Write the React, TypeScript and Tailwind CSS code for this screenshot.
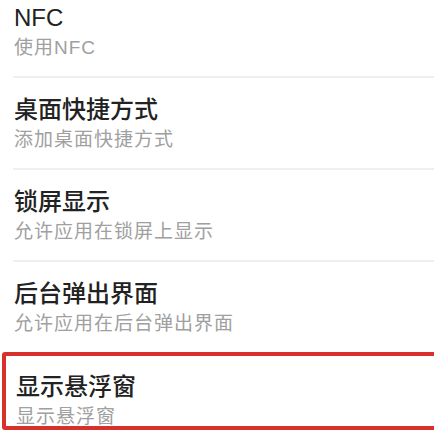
const items = [
  { title: 'NFC', sub: '使用NFC' },
  { title: '桌面快捷方式', sub: '添加桌面快捷方式' },
  { title: '锁屏显示', sub: '允许应用在锁屏上显示' },
  { title: '后台弹出界面', sub: '允许应用在后台弹出界面' },
]

const font = "font-['Liberation_Sans','Noto_Sans_CJK_SC',sans-serif]"

function Row({ title, sub, last }: { title: string; sub: string; last?: boolean }) {
  return (
    <div className={`ml-[13px] pt-[17px] pb-[16px] ${last ? 'pb-[12px]' : 'border-b-2 border-[#efefef]'}`}>
      <div className="pl-[1px] text-[24px] leading-[30px] font-medium text-[#222]">{title}</div>
      <div className="mt-[3px] pl-[1px] text-[19px] leading-[24px] tracking-[1px] text-[#a0a0a0]">{sub}</div>
    </div>
  )
}

export default function App() {
  return (
    <div className={`h-[433px] w-[434px] overflow-hidden bg-white ${font}`}>
      <div className="-mt-[14px]">
        {items.map((it, i) => (
          <Row key={it.title} title={it.title} sub={it.sub} last={i === items.length - 1} />
        ))}
        <div className="ml-[2px] -mr-[12px] h-[78px] overflow-hidden rounded-[3px] border-4 border-[#d8312b] pl-[10px] pt-[16px]">
          <div className="text-[24px] leading-[30px] font-medium text-[#222]">显示悬浮窗</div>
          <div className="mt-[3px] text-[19px] leading-[24px] tracking-[1px] text-[#a0a0a0]">显示悬浮窗</div>
        </div>
      </div>
    </div>
  )
}
